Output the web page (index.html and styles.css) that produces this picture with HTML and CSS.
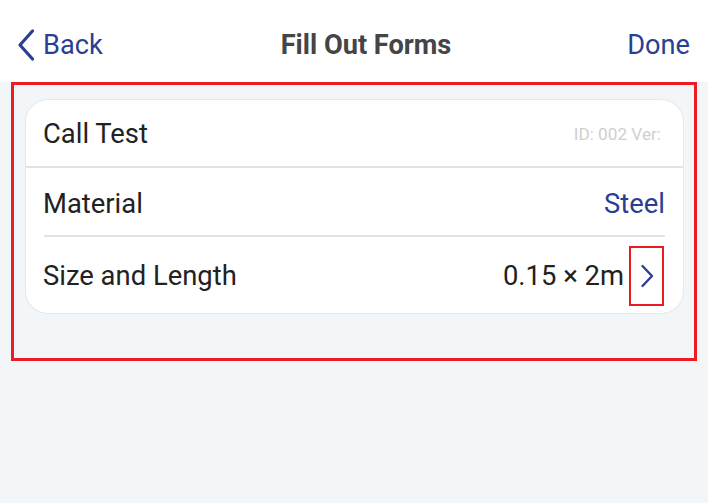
FILE: index.html
```html
<!DOCTYPE html>
<html>
<head>
<meta charset="utf-8">
<link rel="stylesheet" href="styles.css">
</head>
<body>
<div class="app">
  <header class="nav">
    <div class="nav-left">
      <svg class="back-icon" width="18" height="32" viewBox="0 0 18 32"><path d="M15.5 2 L3 16 L15.5 30" fill="none" stroke="#2a3f94" stroke-width="3.2" stroke-linecap="round" stroke-linejoin="round"/></svg>
      <span class="nav-link">Back</span>
    </div>
    <div class="nav-title">Fill Out Forms</div>
    <div class="nav-right"><span class="nav-link">Done</span></div>
  </header>
  <main class="content">
    <div class="highlight">
      <section class="card">
        <div class="row row-head">
          <span class="label">Call Test</span>
          <span class="meta">ID: 002 Ver:</span>
        </div>
        <div class="row row-mid">
          <span class="label">Material</span>
          <span class="value-link">Steel</span>
        </div>
        <div class="row row-last">
          <span class="label">Size and Length</span>
          <span class="value">0.15 × 2m</span>
          <span class="chev-box">
            <svg width="16" height="24" viewBox="0 0 16 24"><path d="M3.5 2 L13 12 L3.5 22" fill="none" stroke="#2a3f94" stroke-width="2.4" stroke-linecap="round" stroke-linejoin="round"/></svg>
          </span>
        </div>
      </section>
    </div>
  </main>
</div>
</body>
</html>
```

FILE: styles.css
```css
* { box-sizing: border-box; }
html, body { margin: 0; padding: 0; }
body {
  width: 708px;
  height: 503px;
  overflow: hidden;
  background: #f3f6f9;
  font-family: Roboto, "Liberation Sans", sans-serif;
}
.app { display: flex; flex-direction: column; height: 503px; }
.nav {
  height: 82px;
  background: #ffffff;
  display: grid;
  grid-template-columns: 1fr auto 1fr;
  align-items: center;
  padding: 0 18px 0 17px;
}
.nav-left { display: flex; align-items: center; gap: 8px; padding-top: 8px; }
.back-icon { display: block; }
.nav-link { color: #2a3f94; font-size: 27.2px; }
.nav-title {
  color: #454545;
  font-size: 27.2px;
  font-weight: 700;
  padding-top: 8px;
  margin-left: 25px;
}
.nav-right { display: flex; justify-content: flex-end; padding-top: 8px; }
.content { padding: 0 11px; }
.highlight {
  border: 3px solid #ec1c24;
  padding: 15px 11px 45px 12px;
  height: 279px;
}
.card {
  background: #ffffff;
  border-radius: 22px;
  box-shadow: 0 0 0 1px #e6e8eb;
  overflow: hidden;
}
.row {
  display: flex;
  align-items: center;
  padding: 2px 18px 0 17px;
}
.label { color: #222222; font-size: 27.4px; flex: 1; }
.row-head {
  height: 68px;
  border-bottom: 2px solid #e3e3e3;
}
.meta { color: #cfcfcf; font-size: 17.2px; padding-right: 4px; }
.row-mid { height: 69px; position: relative; }
.row-mid::after {
  content: "";
  position: absolute;
  left: 18px;
  right: 18px;
  bottom: 0;
  height: 2px;
  background: #e3e3e3;
}
.value-link { color: #2a3f94; font-size: 27.4px; }
.row-last { height: 76px; }
.value { color: #222222; font-size: 27.4px; }
.chev-box {
  width: 35px;
  height: 60px;
  border: 2px solid #ec1c24;
  display: flex;
  align-items: center;
  justify-content: center;
  margin-left: 5px;
  margin-right: 1px;
}
.chev-box svg { display: block; }
```
